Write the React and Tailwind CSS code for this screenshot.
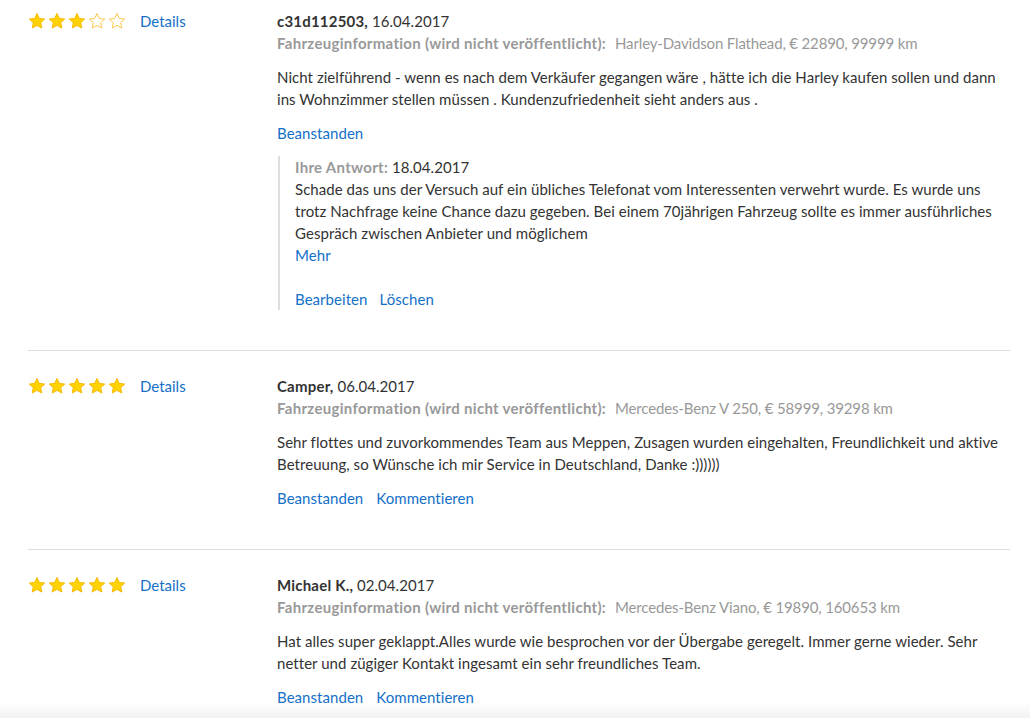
import React from 'react';

const reviews = [
  {
    id: 1,
    rating: 3,
    author: 'c31d112503',
    date: '16.04.2017',
    vehicle: 'Harley-Davidson Flathead, € 22890, 99999 km',
    lines: [
      'Nicht zielführend - wenn es nach dem Verkäufer gegangen wäre , hätte ich die Harley kaufen sollen und dann',
      'ins Wohnzimmer stellen müssen . Kundenzufriedenheit sieht anders aus .',
    ],
    actions: ['Beanstanden'],
    answer: {
      date: '18.04.2017',
      lines: [
        'Schade das uns der Versuch auf ein übliches Telefonat vom Interessenten verwehrt wurde. Es wurde uns',
        'trotz Nachfrage keine Chance dazu gegeben. Bei einem 70jährigen Fahrzeug sollte es immer ausführliches',
        'Gespräch zwischen Anbieter und möglichem',
      ],
    },
  },
  {
    id: 2,
    rating: 5,
    author: 'Camper',
    date: '06.04.2017',
    vehicle: 'Mercedes-Benz V 250, € 58999, 39298 km',
    lines: [
      'Sehr flottes und zuvorkommendes Team aus Meppen, Zusagen wurden eingehalten, Freundlichkeit und aktive',
      'Betreuung, so Wünsche ich mir Service in Deutschland, Danke :))))))',
    ],
    actions: ['Beanstanden', 'Kommentieren'],
  },
  {
    id: 3,
    rating: 5,
    author: 'Michael K.',
    date: '02.04.2017',
    vehicle: 'Mercedes-Benz Viano, € 19890, 160653 km',
    lines: [
      'Hat alles super geklappt.Alles wurde wie besprochen vor der Übergabe geregelt. Immer gerne wieder. Sehr',
      'netter und zügiger Kontakt ingesamt ein sehr freundliches Team.',
    ],
    actions: ['Beanstanden', 'Kommentieren'],
  },
];

const Star = ({ filled }) => (
  <svg width="18" height="18" viewBox="0 0 24 23">
    <path
      d="M12 1.5l3.1 6.6 7.2.8-5.4 4.9 1.5 7.1L12 17.3l-6.4 3.6 1.5-7.1-5.4-4.9 7.2-.8z"
      fill={filled ? '#ffd200' : 'none'}
      stroke={filled ? '#f5b800' : '#f9c74a'}
      strokeWidth="1.3"
      strokeLinejoin="round"
    />
  </svg>
);

const Link = ({ children }) => (
  <a href="#" className="text-[#1470c8] hover:underline">{children}</a>
);

const Review = ({ review, first }) => (
  <div className={`flex border-b border-[#dddddd] ${first ? 'pt-[10px]' : 'pt-[24px]'} pb-[40px]`}>
    <div className="w-[249px] shrink-0 flex items-center h-[22px]">
      <div className="flex gap-[2px]">
        {[1, 2, 3, 4, 5].map(n => (
          <Star key={n} filled={n <= review.rating} />
        ))}
      </div>
      <span className="ml-[14px]"><Link>Details</Link></span>
    </div>
    <div className="flex-1 tracking-[0.05px]">
      <div className="text-[#333333]">
        <span className="font-bold tracking-[0.2px]">{review.author},</span> {review.date}
      </div>
      <div className="text-[#999999]">
        <span className="font-bold tracking-[0.3px]">Fahrzeuginformation (wird nicht veröffentlicht):</span>
        <span className="ml-[9px] tracking-[-0.15px]">{review.vehicle}</span>
      </div>
      <div className="mt-[12px] text-[#333333]">
        {review.lines.map((l, i) => (
          <div key={i} className="whitespace-nowrap">{l}</div>
        ))}
      </div>
      <div className="mt-[12px] flex gap-[13px]">
        {review.actions.map(a => (
          <Link key={a}>{a}</Link>
        ))}
      </div>
      {review.answer && (
        <div className="mt-[12px] ml-[1px] border-l-2 border-[#dddddd] pl-[15px]">
          <div className="text-[#333333]">
            <span className="font-bold text-[#999999] tracking-[0.3px]">Ihre Antwort:</span> {review.answer.date}
          </div>
          {review.answer.lines.map((l, i) => (
            <div key={i} className="whitespace-nowrap text-[#333333]">{l}</div>
          ))}
          <div><Link>Mehr</Link></div>
          <div className="mt-[22px] flex gap-[12px]">
            <Link>Bearbeiten</Link>
            <Link>Löschen</Link>
          </div>
        </div>
      )}
    </div>
  </div>
);

export default function App() {
  return (
    <div
      className="relative w-[1030px] h-[718px] overflow-hidden bg-white text-[15px] leading-[22px]"
      style={{ fontFamily: 'Lato, "Open Sans", sans-serif' }}
    >
      <div className="ml-[28px] w-[982px]">
        {reviews.map((r, i) => (
          <Review key={r.id} review={r} first={i === 0} />
        ))}
      </div>
      <div className="absolute left-0 right-0 bottom-0 h-[16px] bg-gradient-to-b from-transparent to-[#f2f2f2]" />
    </div>
  );
}
